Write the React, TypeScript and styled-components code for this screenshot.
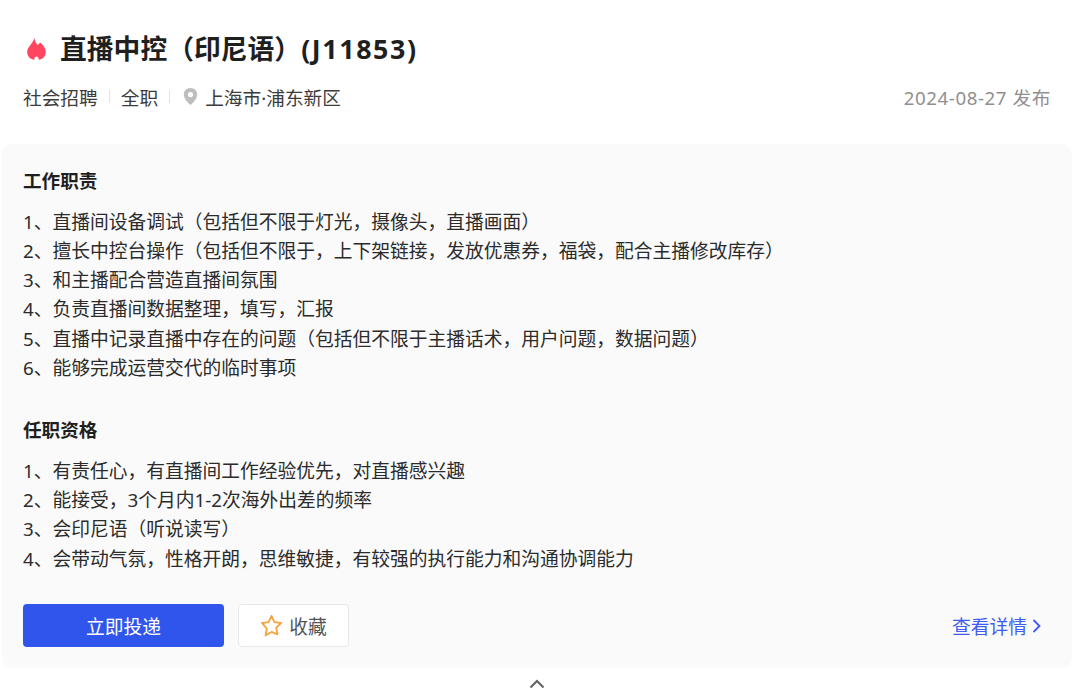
import React from "react";
import styled, { createGlobalStyle } from "styled-components";

const GlobalStyle = createGlobalStyle`
  html, body {
    margin: 0;
    padding: 0;
    background: #fff;
    overflow: hidden;
  }
  body {
    font-family: "Noto Sans", "Noto Sans CJK SC", sans-serif;
  }
`;

const Page = styled.div`
  width: 1080px;
  height: 700px;
  padding: 30px 8px 0 2px;
  box-sizing: border-box;
  display: flex;
  flex-direction: column;
`;

const Header = styled.div`
  padding: 0 21px 0 21px;
  height: 114px;
  flex: none;
`;

const TitleRow = styled.div`
  display: flex;
  align-items: center;
  height: 38px;
  gap: 14px;
`;

const Title = styled.h1`
  margin: 0;
  font-size: 26.8px;
  line-height: 38px;
  font-weight: 700;
  color: #1f1f1f;
  white-space: nowrap;
`;

const TitleCode = styled.span`
  letter-spacing: 1.6px;
`;

const MetaRow = styled.div`
  display: flex;
  align-items: center;
  justify-content: space-between;
  margin-top: 10px;
  height: 37px;
  font-size: 18.7px;
  color: #3c3c3c;
`;

const MetaLeft = styled.div`
  display: flex;
  align-items: center;
`;

const Divider = styled.span`
  width: 1px;
  height: 13px;
  margin: 0 11px;
  background: #e4e4e4;
`;

const PlaceIcon = styled.svg`
  width: 15px;
  height: 17px;
  margin: 0 7px 0 2px;
`;

const Published = styled.span`
  color: #8f8f8f;
  letter-spacing: 0.57px;
`;

const Panel = styled.div`
  background: #fafafa;
  border-radius: 10px;
  height: 524px;
  box-sizing: border-box;
  padding: 22px 21px 21px;
  display: flex;
  flex-direction: column;
  flex: none;
`;

const SectionTitle = styled.h2<{ $gap?: number }>`
  margin: ${p => p.$gap ?? 0}px 0 0;
  font-size: 18.6px;
  line-height: 30px;
  font-weight: 700;
  color: #1f1f1f;
`;

const List = styled.ul`
  list-style: none;
  margin: 10.5px 0 0;
  padding: 0;
`;

const Item = styled.li`
  font-size: 18.75px;
  line-height: 29.3px;
  color: #2b2b2b;
  white-space: nowrap;
`;

const Actions = styled.div`
  display: flex;
  align-items: center;
  margin-top: auto;
`;

const ApplyButton = styled.button`
  width: 201px;
  height: 43px;
  border: none;
  border-radius: 4px;
  background: #3055ec;
  color: #fff;
  font: inherit;
  font-size: 18.75px;
  padding: 0;
`;

const SaveButton = styled.button`
  width: 111px;
  height: 43px;
  margin-left: 14px;
  border: 1px solid #e8e8e8;
  border-radius: 4px;
  background: #fff;
  color: #555;
  font: inherit;
  font-size: 18.75px;
  padding: 0;
  display: flex;
  align-items: center;
  justify-content: center;
  gap: 6px;
`;

const DetailLink = styled.a`
  margin: 0 10px 0 auto;
  display: flex;
  align-items: center;
  gap: 5px;
  color: #3f5bf0;
  font-size: 18.75px;
  text-decoration: none;
`;

const Collapse = styled.div`
  display: flex;
  justify-content: center;
  padding-top: 11px;
`;

const duties = [
  "1、直播间设备调试（包括但不限于灯光，摄像头，直播画面）",
  "2、擅长中控台操作（包括但不限于，上下架链接，发放优惠券，福袋，配合主播修改库存）",
  "3、和主播配合营造直播间氛围",
  "4、负责直播间数据整理，填写，汇报",
  "5、直播中记录直播中存在的问题（包括但不限于主播话术，用户问题，数据问题）",
  "6、能够完成运营交代的临时事项",
];

const requirements = [
  "1、有责任心，有直播间工作经验优先，对直播感兴趣",
  "2、能接受，3个月内1-2次海外出差的频率",
  "3、会印尼语（听说读写）",
  "4、会带动气氛，性格开朗，思维敏捷，有较强的执行能力和沟通协调能力",
];

export default function App() {
  return (
    <>
      <GlobalStyle />
      <Page>
        <Header>
          <TitleRow>
            <svg width="23" height="23" viewBox="0 0 23 23">
              <path
                fill="#ff4560"
                d="M11.500 0C12 3.500 13 5 14.500 7c1-.5 2-1.500 2.500-2.500 3.500 2.500 5.800 6 5.800 9.500 0 5-4 8-9.300 8s-9.300-3-9.300-8c0-5 5.300-8 7.300-14z"
              />
              <path fill="#fff" d="M13.500 18.500c1.200 0 2.100 1.300 2.100 2.500 0 .4-.1.700-.2 1h-3.800c-.1-.3-.2-.6-.2-1 0-1.200.9-2.500 2.100-2.500z" />
            </svg>
            <Title>
              直播中控（印尼语）<TitleCode>(J11853)</TitleCode>
            </Title>
          </TitleRow>
          <MetaRow>
            <MetaLeft>
              社会招聘
              <Divider />
              全职
              <Divider />
              <PlaceIcon viewBox="0 0 15 17">
                <path
                  fill="#bdbdbd"
                  fillRule="evenodd"
                  d="M7.500 0C3.600 0 .8 2.900.8 6.500c0 3.800 3.500 7.900 6.700 10.500 3.200-2.600 6.700-6.700 6.700-10.500C14.200 2.900 11.400 0 7.500 0zm0 4a2.600 2.600 0 1 1 0 5.200 2.600 2.600 0 0 1 0-5.200z"
                />
              </PlaceIcon>
              上海市·浦东新区
            </MetaLeft>
            <Published>2024-08-27 发布</Published>
          </MetaRow>
        </Header>
        <Panel>
          <SectionTitle>工作职责</SectionTitle>
          <List>
            {duties.map(d => (
              <Item key={d}>{d}</Item>
            ))}
          </List>
          <SectionTitle $gap={33}>任职资格</SectionTitle>
          <List>
            {requirements.map(r => (
              <Item key={r}>{r}</Item>
            ))}
          </List>
          <Actions>
            <ApplyButton>立即投递</ApplyButton>
            <SaveButton>
              <svg width="23" height="23" viewBox="0 0 22 22">
                <path
                  fill="none"
                  stroke="#f5a544"
                  strokeWidth="1.800"
                  strokeLinejoin="round"
                  d="M11 1.800l2.800 6 6.400.8-4.700 4.400 1.200 6.400L11 17.200l-5.700 3.200 1.200-6.400L1.800 8.600l6.400-.8z"
                />
              </svg>
              收藏
            </SaveButton>
            <DetailLink href="#">
              查看详情
              <svg width="9" height="14" viewBox="0 0 9 14">
                <path fill="none" stroke="#3f5bf0" strokeWidth="1.800" d="M1.500 1l6 6-6 6" />
              </svg>
            </DetailLink>
          </Actions>
        </Panel>
        <Collapse>
          <svg width="16" height="10" viewBox="0 0 16 10">
            <path fill="none" stroke="#5f5f5f" strokeWidth="2" d="M1.500 8.500L8 2l6.500 6.500" />
          </svg>
        </Collapse>
      </Page>
    </>
  );
}
